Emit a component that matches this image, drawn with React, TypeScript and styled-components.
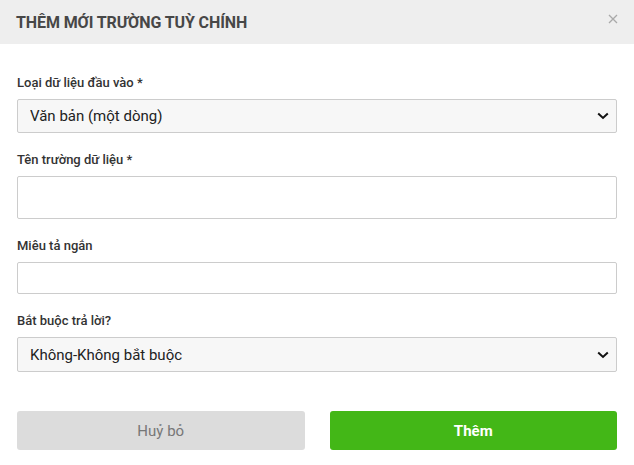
import React, { useState } from 'react';
import styled, { createGlobalStyle } from 'styled-components';

const GlobalStyle = createGlobalStyle`
  html, body {
    margin: 0;
    padding: 0;
    background: #ffffff;
  }
  body {
    font-family: Roboto, "Liberation Sans", Arial, sans-serif;
    color: #333333;
  }
`;

const INPUT_TYPES = ['Văn bản (một dòng)', 'Văn bản (nhiều dòng)', 'Số', 'Ngày tháng'];
const REQUIRED_OPTIONS = ['Không-Không bắt buộc', 'Có-Bắt buộc'];

const App = () => {
  const [inputType, setInputType] = useState(INPUT_TYPES[0]);
  const [name, setName] = useState('');
  const [description, setDescription] = useState('');
  const [required, setRequired] = useState(REQUIRED_OPTIONS[0]);

  return (
    <>
      <GlobalStyle />
      <StyledModal>
        <StyledHeader>
          <StyledTitle>Thêm mới trường tuỳ chính</StyledTitle>
          <StyledClose type="button" aria-label="close">
            <svg width="10" height="10" viewBox="0 0 10 10">
              <path d="M1 1L9 9M9 1L1 9" stroke="#a9a9a9" strokeWidth="1.3" fill="none" />
            </svg>
          </StyledClose>
        </StyledHeader>

        <StyledBody>
          <StyledField>
            <StyledLabel>Loại dữ liệu đầu vào *</StyledLabel>
            <SelectBox value={inputType} options={INPUT_TYPES} onChange={setInputType} height={34} />
          </StyledField>

          <StyledField>
            <StyledLabel>Tên trường dữ liệu *</StyledLabel>
            <StyledInput $height={43} value={name} onChange={(e) => setName(e.currentTarget.value)} />
          </StyledField>

          <StyledField>
            <StyledLabel>Miêu tả ngắn</StyledLabel>
            <StyledInput $height={32} value={description} onChange={(e) => setDescription(e.currentTarget.value)} />
          </StyledField>

          <StyledField>
            <StyledLabel>Bắt buộc trả lời?</StyledLabel>
            <SelectBox value={required} options={REQUIRED_OPTIONS} onChange={setRequired} height={35} />
          </StyledField>

          <StyledActions>
            <StyledButton type="button" $variant="cancel">Huỷ bỏ</StyledButton>
            <StyledButton type="button" $variant="primary">Thêm</StyledButton>
          </StyledActions>
        </StyledBody>
      </StyledModal>
    </>
  );
};

type SelectProps = {
  value: string;
  options: string[];
  height: number;
  onChange: (v: string) => void;
};

function SelectBox({ value, options, height, onChange }: SelectProps) {
  return (
    <StyledSelectWrap>
      <StyledSelect $height={height} value={value} onChange={(e) => onChange(e.currentTarget.value)}>
        {options.map((o) => (
          <option key={o} value={o}>
            {o}
          </option>
        ))}
      </StyledSelect>
      <StyledChevron width="12" height="8" viewBox="0 0 12 8">
        <path d="M1.2 1.5L6 6L10.8 1.5" stroke="#111" strokeWidth="2" fill="none" />
      </StyledChevron>
    </StyledSelectWrap>
  );
}

const StyledModal = styled.div`
  width: 634px;
  height: 465px;
  background: #ffffff;
  display: flex;
  flex-direction: column;
`;
const StyledHeader = styled.div`
  height: 44px;
  background: #eeeeee;
  display: flex;
  align-items: center;
  justify-content: space-between;
  padding: 0 15px 0 16px;
  box-sizing: border-box;
`;
const StyledTitle = styled.h2`
  margin: 0;
  font-size: 16px;
  font-weight: 700;
  text-transform: uppercase;
  color: #474747;
  letter-spacing: -0.1px;
`;
const StyledClose = styled.button`
  border: none;
  background: transparent;
  padding: 0;
  width: 12px;
  height: 12px;
  display: flex;
  align-items: center;
  justify-content: center;
  margin-top: -6px;
  cursor: pointer;
`;
const StyledBody = styled.div`
  padding: 31px 17px 0;
  display: flex;
  flex-direction: column;
`;
const StyledField = styled.div`
  display: flex;
  flex-direction: column;
  margin-bottom: 19px;
`;
const StyledLabel = styled.label`
  font-size: 13px;
  line-height: 16px;
  font-weight: 500;
  color: #333333;
  margin-bottom: 8px;
`;
const StyledInput = styled.input<{ $height: number }>`
  height: ${({ $height }) => $height}px;
  box-sizing: border-box;
  border: 1px solid #cccccc;
  border-radius: 2px;
  background: #ffffff;
  padding: 0 12px;
  font-family: inherit;
  font-size: 15px;
  outline: none;
`;
const StyledSelectWrap = styled.div`
  position: relative;
`;
const StyledSelect = styled.select<{ $height: number }>`
  width: 100%;
  height: ${({ $height }) => $height}px;
  box-sizing: border-box;
  appearance: none;
  border: 1px solid #cccccc;
  border-radius: 2px;
  background: #f7f7f7;
  padding: 0 12px;
  font-family: inherit;
  font-size: 15px;
  color: #222222;
  outline: none;
`;
const StyledChevron = styled.svg`
  position: absolute;
  right: 8px;
  top: 50%;
  transform: translateY(-50%);
  pointer-events: none;
`;
const StyledActions = styled.div`
  display: grid;
  grid-template-columns: 1fr 1fr;
  gap: 25px;
  margin-top: 20px;
`;
const StyledButton = styled.button<{ $variant: 'cancel' | 'primary' }>`
  height: 39px;
  border: none;
  border-radius: 3px;
  font-family: inherit;
  font-size: 15px;
  cursor: pointer;
  background: ${({ $variant }) => ($variant === 'primary' ? '#43b717' : '#dcdcdc')};
  color: ${({ $variant }) => ($variant === 'primary' ? '#ffffff' : '#777777')};
  font-weight: ${({ $variant }) => ($variant === 'primary' ? 700 : 400)};
`;

export default App;
